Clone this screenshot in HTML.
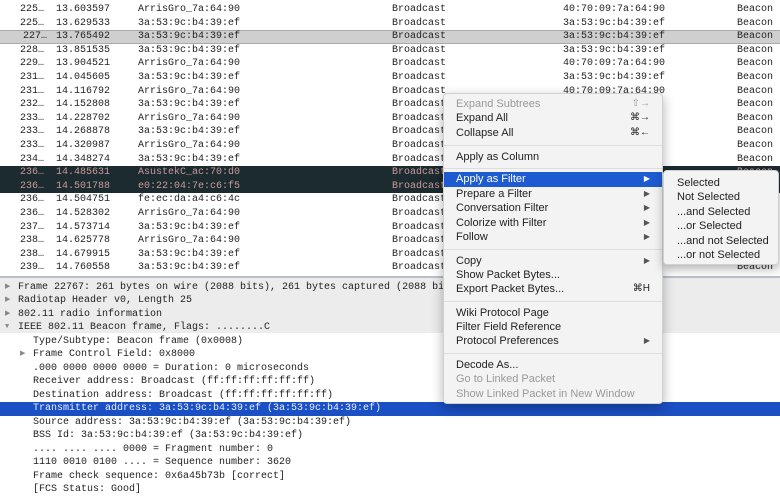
<!DOCTYPE html>
<html><head><meta charset="utf-8"><style>
*{margin:0;padding:0;box-sizing:border-box}
body{width:780px;height:491px;overflow:hidden;background:#fff;position:relative;font-family:"Liberation Mono",monospace;font-size:10px;color:#222}
.r{position:absolute;left:0;width:780px;height:13.6px;line-height:13.6px;white-space:pre}
.r span{position:absolute;top:0}
.sel{background:#cfcfcf;border-top:1px solid #aaa;border-bottom:1px solid #aaa;line-height:11.6px}
.dk{background:#1c2b30;color:#c99a9a}
.d{position:absolute;left:0;width:780px;height:13.5px;line-height:13.5px;white-space:pre}
.hl{background:#1b4fc4;color:#e8eeff}
.tri{position:absolute;font-size:7px;color:#888}
.menu{position:absolute;left:443px;top:93px;width:220px;height:311px;background:#f3f3f3;border:1px solid #d0d0d0;border-radius:4px;box-shadow:0 4px 12px rgba(0,0,0,.3);font-family:"Liberation Sans",sans-serif;font-size:11px;color:#222}
.mi{position:absolute;left:0;width:218px;height:14.4px;line-height:14.4px;padding-left:12px}
.mi .k{position:absolute;right:12px;top:0;font-size:10px}
.dis{color:#999}
.on{background:#1e5bd0;color:#fff}
.sep{position:absolute;left:0;width:218px;height:1px;background:#ddd}
.sub{position:absolute;left:663px;top:170px;width:116px;height:95px;background:#f3f3f3;border:1px solid #d0d0d0;border-radius:4px;box-shadow:0 4px 10px rgba(0,0,0,.3);font-family:"Liberation Sans",sans-serif;font-size:11px;color:#222}
.si{position:absolute;left:13px;height:14.4px;line-height:14.4px}
#det{position:absolute;left:0;top:1.5px;width:780px;height:491px}
</style></head><body>

<div class="r" style="top:3px"><span style="left:20px">225…</span><span style="left:56px">13.603597</span><span style="left:138px">ArrisGro_7a:64:90</span><span style="left:392px">Broadcast</span><span style="left:563px">40:70:09:7a:64:90</span><span style="left:737px">Beacon</span></div>
<div class="r" style="top:16.6px"><span style="left:20px">225…</span><span style="left:56px">13.629533</span><span style="left:138px">3a:53:9c:b4:39:ef</span><span style="left:392px">Broadcast</span><span style="left:563px">3a:53:9c:b4:39:ef</span><span style="left:737px">Beacon</span></div>
<div class="r sel" style="top:30.2px"><span style="left:23px">227…</span><span style="left:56px">13.765492</span><span style="left:138px">3a:53:9c:b4:39:ef</span><span style="left:392px">Broadcast</span><span style="left:563px">3a:53:9c:b4:39:ef</span><span style="left:737px">Beacon</span></div>
<div class="r" style="top:43.8px"><span style="left:20px">228…</span><span style="left:56px">13.851535</span><span style="left:138px">3a:53:9c:b4:39:ef</span><span style="left:392px">Broadcast</span><span style="left:563px">3a:53:9c:b4:39:ef</span><span style="left:737px">Beacon</span></div>
<div class="r" style="top:57.4px"><span style="left:20px">229…</span><span style="left:56px">13.904521</span><span style="left:138px">ArrisGro_7a:64:90</span><span style="left:392px">Broadcast</span><span style="left:563px">40:70:09:7a:64:90</span><span style="left:737px">Beacon</span></div>
<div class="r" style="top:71px"><span style="left:20px">231…</span><span style="left:56px">14.045605</span><span style="left:138px">3a:53:9c:b4:39:ef</span><span style="left:392px">Broadcast</span><span style="left:563px">3a:53:9c:b4:39:ef</span><span style="left:737px">Beacon</span></div>
<div class="r" style="top:84.6px"><span style="left:20px">231…</span><span style="left:56px">14.116792</span><span style="left:138px">ArrisGro_7a:64:90</span><span style="left:392px">Broadcast</span><span style="left:563px">40:70:09:7a:64:90</span><span style="left:737px">Beacon</span></div>
<div class="r" style="top:98.2px"><span style="left:20px">232…</span><span style="left:56px">14.152808</span><span style="left:138px">3a:53:9c:b4:39:ef</span><span style="left:392px">Broadcast</span><span style="left:737px">Beacon</span></div>
<div class="r" style="top:111.8px"><span style="left:20px">233…</span><span style="left:56px">14.228702</span><span style="left:138px">ArrisGro_7a:64:90</span><span style="left:392px">Broadcast</span><span style="left:737px">Beacon</span></div>
<div class="r" style="top:125.4px"><span style="left:20px">233…</span><span style="left:56px">14.268878</span><span style="left:138px">3a:53:9c:b4:39:ef</span><span style="left:392px">Broadcast</span><span style="left:737px">Beacon</span></div>
<div class="r" style="top:139px"><span style="left:20px">233…</span><span style="left:56px">14.320987</span><span style="left:138px">ArrisGro_7a:64:90</span><span style="left:392px">Broadcast</span><span style="left:737px">Beacon</span></div>
<div class="r" style="top:152.6px"><span style="left:20px">234…</span><span style="left:56px">14.348274</span><span style="left:138px">3a:53:9c:b4:39:ef</span><span style="left:392px">Broadcast</span><span style="left:737px">Beacon</span></div>
<div class="r dk" style="top:166.2px"><span style="left:20px">236…</span><span style="left:56px">14.485631</span><span style="left:138px">AsustekC_ac:70:d0</span><span style="left:392px">Broadcast</span><span style="left:737px">Beacon</span></div>
<div class="r dk" style="top:179.8px"><span style="left:20px">236…</span><span style="left:56px">14.501788</span><span style="left:138px">e0:22:04:7e:c6:f5</span><span style="left:392px">Broadcast</span><span style="left:737px">Beacon</span></div>
<div class="r" style="top:193.4px"><span style="left:20px">236…</span><span style="left:56px">14.504751</span><span style="left:138px">fe:ec:da:a4:c6:4c</span><span style="left:392px">Broadcast</span><span style="left:737px">Beacon</span></div>
<div class="r" style="top:207px"><span style="left:20px">236…</span><span style="left:56px">14.528302</span><span style="left:138px">ArrisGro_7a:64:90</span><span style="left:392px">Broadcast</span><span style="left:737px">Beacon</span></div>
<div class="r" style="top:220.6px"><span style="left:20px">237…</span><span style="left:56px">14.573714</span><span style="left:138px">3a:53:9c:b4:39:ef</span><span style="left:392px">Broadcast</span><span style="left:737px">Beacon</span></div>
<div class="r" style="top:234.2px"><span style="left:20px">238…</span><span style="left:56px">14.625778</span><span style="left:138px">ArrisGro_7a:64:90</span><span style="left:392px">Broadcast</span><span style="left:737px">Beacon</span></div>
<div class="r" style="top:247.8px"><span style="left:20px">238…</span><span style="left:56px">14.679915</span><span style="left:138px">3a:53:9c:b4:39:ef</span><span style="left:392px">Broadcast</span><span style="left:737px">Beacon</span></div>
<div class="r" style="top:261.4px"><span style="left:20px">239…</span><span style="left:56px">14.760558</span><span style="left:138px">3a:53:9c:b4:39:ef</span><span style="left:392px">Broadcast</span><span style="left:737px">Beacon</span></div>
<div style="position:absolute;left:0;top:276px;width:780px;height:2px;background:#b8c0cc"></div>

<div style="position:absolute;left:0;top:278px;width:780px;height:55px;background:#ececec"></div>
<div id="det">
<div class="d" style="top:279px"><span class="tri" style="left:5px">▶</span><span style="position:absolute;left:18px">Frame 22767: 261 bytes on wire (2088 bits), 261 bytes captured (2088 bits)</span></div>
<div class="d" style="top:292.5px"><span class="tri" style="left:5px">▶</span><span style="position:absolute;left:18px">Radiotap Header v0, Length 25</span></div>
<div class="d" style="top:306px"><span class="tri" style="left:5px">▶</span><span style="position:absolute;left:18px">802.11 radio information</span></div>
<div class="d" style="top:319.5px"><span class="tri" style="left:5px">▼</span><span style="position:absolute;left:18px">IEEE 802.11 Beacon frame, Flags: ........C</span></div>
<div class="d" style="top:333px"><span style="position:absolute;left:33px">Type/Subtype: Beacon frame (0x0008)</span></div>
<div class="d" style="top:346.5px"><span class="tri" style="left:20px">▶</span><span style="position:absolute;left:33px">Frame Control Field: 0x8000</span></div>
<div class="d" style="top:360px"><span style="position:absolute;left:33px">.000 0000 0000 0000 = Duration: 0 microseconds</span></div>
<div class="d" style="top:373.5px"><span style="position:absolute;left:33px">Receiver address: Broadcast (ff:ff:ff:ff:ff:ff)</span></div>
<div class="d" style="top:387px"><span style="position:absolute;left:33px">Destination address: Broadcast (ff:ff:ff:ff:ff:ff)</span></div>
<div class="d hl" style="top:400px;height:14px"><span style="position:absolute;left:33px">Transmitter address: 3a:53:9c:b4:39:ef (3a:53:9c:b4:39:ef)</span></div>
<div class="d" style="top:414px"><span style="position:absolute;left:33px">Source address: 3a:53:9c:b4:39:ef (3a:53:9c:b4:39:ef)</span></div>
<div class="d" style="top:427.5px"><span style="position:absolute;left:33px">BSS Id: 3a:53:9c:b4:39:ef (3a:53:9c:b4:39:ef)</span></div>
<div class="d" style="top:441px"><span style="position:absolute;left:33px">.... .... .... 0000 = Fragment number: 0</span></div>
<div class="d" style="top:454.5px"><span style="position:absolute;left:33px">1110 0010 0100 .... = Sequence number: 3620</span></div>
<div class="d" style="top:468px"><span style="position:absolute;left:33px">Frame check sequence: 0x6a45b73b [correct]</span></div>
<div class="d" style="top:481.5px"><span style="position:absolute;left:33px">[FCS Status: Good]</span></div>
</div>

<div class="menu">
<div class="mi dis" style="top:3px">Expand Subtrees<span class="k">⇧→</span></div>
<div class="mi" style="top:17.4px">Expand All<span class="k">⌘→</span></div>
<div class="mi" style="top:31.8px">Collapse All<span class="k">⌘←</span></div>
<div class="sep" style="top:51px"></div>
<div class="mi" style="top:55.5px">Apply as Column</div>
<div class="sep" style="top:74px"></div>
<div class="mi on" style="top:78px;height:15px">Apply as Filter<span class="k" style="font-size:8px">▶</span></div>
<div class="mi" style="top:93px">Prepare a Filter<span class="k" style="font-size:8px;color:#555">▶</span></div>
<div class="mi" style="top:107.4px">Conversation Filter<span class="k" style="font-size:8px;color:#555">▶</span></div>
<div class="mi" style="top:121.8px">Colorize with Filter<span class="k" style="font-size:8px;color:#555">▶</span></div>
<div class="mi" style="top:136.2px">Follow<span class="k" style="font-size:8px;color:#555">▶</span></div>
<div class="sep" style="top:155px"></div>
<div class="mi" style="top:159.5px">Copy<span class="k" style="font-size:8px;color:#555">▶</span></div>
<div class="mi" style="top:173.9px">Show Packet Bytes...</div>
<div class="mi" style="top:188.3px">Export Packet Bytes...<span class="k">⌘H</span></div>
<div class="sep" style="top:207px"></div>
<div class="mi" style="top:211.5px">Wiki Protocol Page</div>
<div class="mi" style="top:225.9px">Filter Field Reference</div>
<div class="mi" style="top:240.3px">Protocol Preferences<span class="k" style="font-size:8px;color:#555">▶</span></div>
<div class="sep" style="top:259px"></div>
<div class="mi" style="top:264px">Decode As...</div>
<div class="mi dis" style="top:278.4px">Go to Linked Packet</div>
<div class="mi dis" style="top:292.8px">Show Linked Packet in New Window</div>
</div>

<div class="sub">
<div class="si" style="top:5px">Selected</div>
<div class="si" style="top:19.4px">Not Selected</div>
<div class="si" style="top:33.8px">...and Selected</div>
<div class="si" style="top:48.2px">...or Selected</div>
<div class="si" style="top:62.6px">...and not Selected</div>
<div class="si" style="top:77px">...or not Selected</div>
</div>
</body></html>
